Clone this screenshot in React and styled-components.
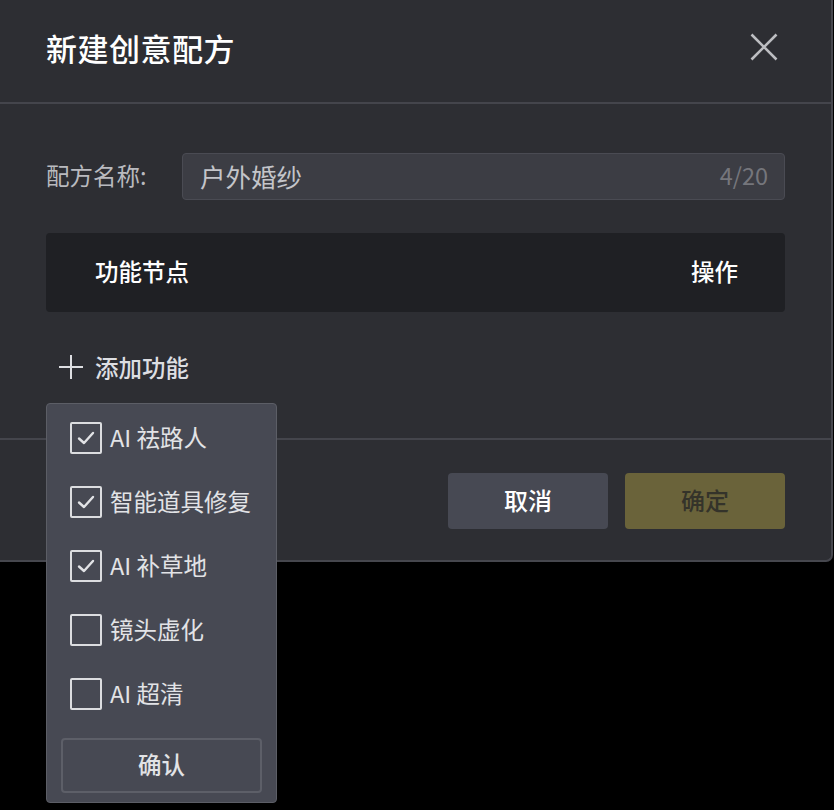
import React from "react";
import styled, { createGlobalStyle } from "styled-components";

const GlobalStyle = createGlobalStyle`
  html, body {
    margin: 0;
    padding: 0;
    background: #000;
  }
  body {
    font-family: "Noto Sans CJK SC", "Noto Sans", sans-serif;
  }
`;

/* page + modal shell */

const Page = styled.div`
  min-height: 100vh;
  background: #000;
`;

const Modal = styled.div`
  width: 831px;
  background: #2d2e33;
  border-right: 2px solid #46474e;
  border-bottom: 2px solid #46474e;
  border-bottom-right-radius: 7px;
`;

const Header = styled.div`
  height: 104px;
  box-sizing: border-box;
  display: flex;
  align-items: center;
  justify-content: space-between;
  padding: 0 52px 8px 46px;
  border-bottom: 2px solid #44454c;
`;

const Title = styled.h1`
  margin: 0;
  font-size: 31px;
  font-weight: 500;
  color: #fff;
  letter-spacing: 0.5px;
`;

const CloseButton = styled.button`
  background: none;
  border: none;
  padding: 0;
  width: 30px;
  height: 30px;
  display: flex;
  align-items: center;
  justify-content: center;
  cursor: pointer;
`;

const Body = styled.div`
  padding: 48px 46px 55px 46px;
`;

const FormRow = styled.div`
  display: flex;
  align-items: center;
  height: 48px;
`;

const Label = styled.label`
  width: 136px;
  font-size: 23.5px;
  color: #b9babf;
  padding-bottom: 2px;
`;

const InputBox = styled.div`
  flex: 1;
  height: 47px;
  box-sizing: border-box;
  display: flex;
  align-items: center;
  justify-content: space-between;
  padding: 0 16px 2px 17px;
  background: #3c3d44;
  border: 1px solid #4a4b53;
  border-radius: 4px;
`;

const InputText = styled.span`
  font-size: 25.5px;
  color: #c4c5ca;
`;

const Counter = styled.span`
  font-size: 23.5px;
  color: #75767c;
`;

const TableHead = styled.div`
  margin-top: 33px;
  height: 79px;
  box-sizing: border-box;
  display: flex;
  align-items: center;
  justify-content: space-between;
  padding: 0 47px 4px 49px;
  background: #1f2024;
  border-radius: 4px;
`;

const HeadCell = styled.span`
  font-size: 23.5px;
  font-weight: 500;
  color: #fff;
`;

const AddRow = styled.div`
  position: relative;
  margin-top: 41px;
  height: 32px;
`;

const AddButton = styled.button`
  display: flex;
  align-items: center;
  gap: 12px;
  background: none;
  border: none;
  padding: 0 0 0 13px;
  margin-top: -2px;
  font-family: inherit;
  font-size: 23.5px;
  font-weight: 500;
  color: #dddee2;
  height: 32px;
  cursor: pointer;
`;

const Footer = styled.div`
  display: flex;
  justify-content: flex-end;
  gap: 17px;
  padding: 33px 46px 31px;
  border-top: 2px solid #44454c;
`;

const ActionButton = styled.button`
  width: 160px;
  height: 56px;
  border: none;
  border-radius: 4px;
  padding: 0 0 3px;
  font-family: inherit;
  font-size: 24px;
  font-weight: 500;
  background: ${(p) => (p.primary ? "#6a633a" : "#474953")};
  color: ${(p) => (p.primary ? "#34332a" : "#fff")};
  cursor: pointer;
`;

/* dropdown */

const Dropdown = styled.div`
  position: absolute;
  top: 52px;
  left: 0;
  width: 231px;
  height: 400px;
  box-sizing: border-box;
  padding: 18px 14px 8px;
  background: #474953;
  border: 1px solid #5c5e66;
  border-radius: 4px;
  display: flex;
  flex-direction: column;
  z-index: 10;
`;

const OptionList = styled.div`
  display: flex;
  flex-direction: column;
  gap: 32px;
  padding-left: 9px;
`;

const Option = styled.label`
  display: flex;
  align-items: center;
  gap: 8px;
  height: 32px;
  font-size: 23.5px;
  color: #e2e3e6;
  white-space: nowrap;
`;

const Box = styled.span`
  width: 32px;
  height: 32px;
  box-sizing: border-box;
  border: 2px solid #dcdde0;
  border-radius: 2px;
  display: flex;
  align-items: center;
  justify-content: center;
  flex-shrink: 0;
`;

const OptionText = styled.span`
  margin-top: -2px;
`;

const ConfirmButton = styled.button`
  margin-top: 28px;
  height: 55px;
  width: 100%;
  padding: 0 0 3px;
  background: transparent;
  border: 2px solid #5d5f68;
  border-radius: 4px;
  font-family: inherit;
  font-size: 23.5px;
  font-weight: 500;
  color: #e2e3e6;
  cursor: pointer;
`;

const CloseIcon = () => (
  <svg width="28" height="28" viewBox="0 0 28 28">
    <path d="M1.5 1.5 L26.5 26.5 M26.5 1.5 L1.5 26.5" stroke="#bdbec2" strokeWidth="2.6" fill="none" />
  </svg>
);

const PlusIcon = () => (
  <svg width="24" height="24" viewBox="0 0 24 24">
    <path d="M12 0 V24 M0 12 H24" stroke="#dddee2" strokeWidth="2" fill="none" />
  </svg>
);

const CheckMark = () => (
  <svg width="20" height="20" viewBox="0 0 20 20">
    <path d="M3 10.5 L8 15 L17 5" stroke="#e2e3e6" strokeWidth="2.4" fill="none" strokeLinecap="round" strokeLinejoin="round" />
  </svg>
);

const options = [
  { name: "AI 祛路人", checked: true },
  { name: "智能道具修复", checked: true },
  { name: "AI 补草地", checked: true },
  { name: "镜头虚化", checked: false },
  { name: "AI 超清", checked: false },
];

const App = () => {
  return (
    <Page>
      <GlobalStyle />
      <Modal>
        <Header>
          <Title>新建创意配方</Title>
          <CloseButton>
            <CloseIcon />
          </CloseButton>
        </Header>

        <Body>
          <FormRow>
            <Label>配方名称:</Label>
            <InputBox>
              <InputText>户外婚纱</InputText>
              <Counter>4/20</Counter>
            </InputBox>
          </FormRow>

          <TableHead>
            <HeadCell>功能节点</HeadCell>
            <HeadCell>操作</HeadCell>
          </TableHead>

          <AddRow>
            <AddButton>
              <PlusIcon />
              添加功能
            </AddButton>

            <Dropdown>
              <OptionList>
                {options.map((o) => (
                  <Option key={o.name}>
                    <Box>{o.checked && <CheckMark />}</Box>
                    <OptionText>{o.name}</OptionText>
                  </Option>
                ))}
              </OptionList>
              <ConfirmButton>确认</ConfirmButton>
            </Dropdown>
          </AddRow>
        </Body>

        <Footer>
          <ActionButton>取消</ActionButton>
          <ActionButton primary>确定</ActionButton>
        </Footer>
      </Modal>
    </Page>
  );
};

export default App;
